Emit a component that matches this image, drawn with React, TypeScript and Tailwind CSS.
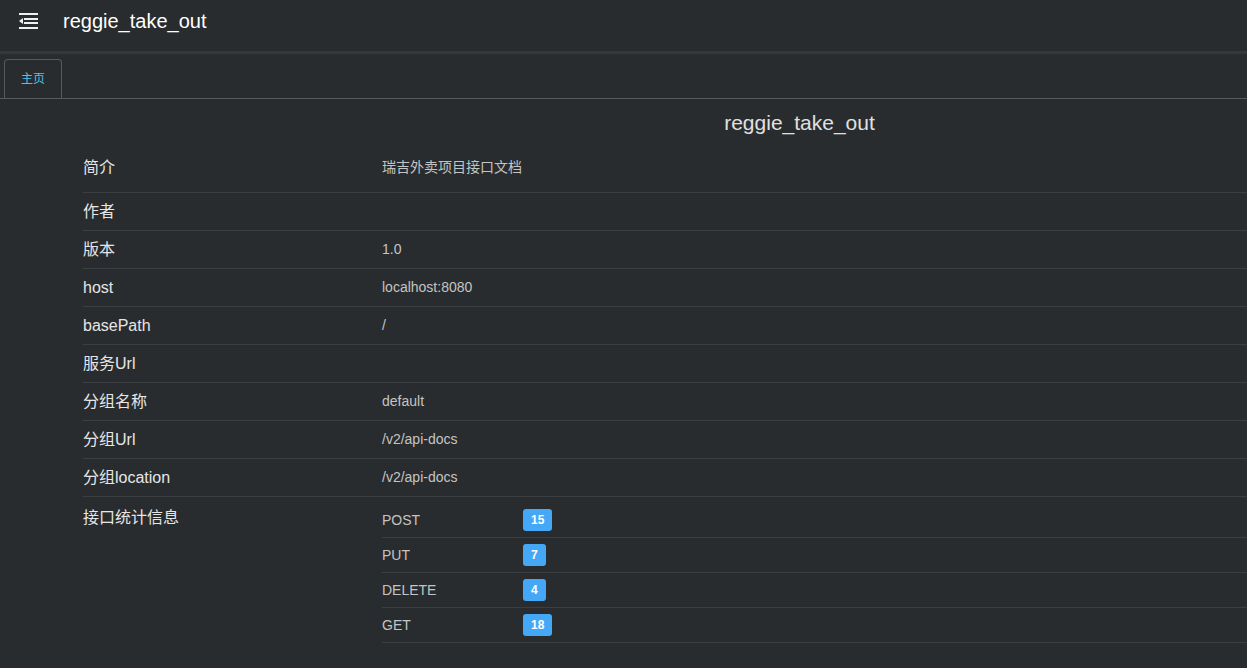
import React from "react";

const rows: { label: string; value: string; tall?: boolean }[] = [
  { label: "简介", value: "瑞吉外卖项目接口文档", tall: true },
  { label: "作者", value: "" },
  { label: "版本", value: "1.0" },
  { label: "host", value: "localhost:8080" },
  { label: "basePath", value: "/" },
  { label: "服务Url", value: "" },
  { label: "分组名称", value: "default" },
  { label: "分组Url", value: "/v2/api-docs" },
  { label: "分组location", value: "/v2/api-docs" },
];

const stats = [
  { m: "POST", n: 15 },
  { m: "PUT", n: 7 },
  { m: "DELETE", n: 4 },
  { m: "GET", n: 18 },
];

export default function App() {
  return (
    <div
      className="w-[1247px] h-[668px] overflow-hidden bg-[#292c2e] text-[#e2e2e2]"
      style={{ fontFamily: '"Liberation Sans", Arial, "Noto Sans CJK SC", sans-serif' }}
    >
      <div className="h-[51px] flex items-center pb-[9px]">
        <svg width="20" height="18" viewBox="0 0 20 18" className="ml-[19px]" fill="#f0f0f0">
          <rect x="0" y="1" width="19" height="2" />
          <rect x="5" y="6" width="14" height="2" />
          <rect x="5" y="10" width="14" height="2" />
          <rect x="0" y="15" width="19" height="2" />
          <polygon points="0,9 4,6 4,12" />
        </svg>
        <div className="ml-[24px] text-[20px] text-white leading-none">reggie_take_out</div>
      </div>
      <div className="h-[3px] bg-[#34383a]" />
      <div className="mt-[5px] h-[40px] border-b border-[#575a5c] flex items-end pl-[4px]">
        <div className="w-[58px] h-[39px] border border-b-0 border-[#575a5c] rounded-t-[4px] flex items-center justify-center text-[12px] text-[#4cc4ea]">
          主页
        </div>
      </div>
      <div className="h-[44px] pt-[4px] flex items-center justify-center pl-[352px] text-[21px] text-[#e0e0e0]">
        reggie_take_out
      </div>
      <div className="ml-[83px]">
        {rows.map((r) => (
          <div
            key={r.label}
            className={`flex items-center border-b border-[#3c3f41] ${r.tall ? "h-[50px]" : "h-[38px]"}`}
          >
            <div className="w-[299px] text-[16px] text-[#e6e6e6]">{r.label}</div>
            <div className="text-[14px] text-[#c4c4c4]">{r.value}</div>
          </div>
        ))}
        <div className="flex">
          <div className="w-[299px] pt-[9px] text-[16px] text-[#e6e6e6]">接口统计信息</div>
          <div className="flex-1 pt-[6px]">
            {stats.map((s) => (
              <div key={s.m} className="h-[35px] flex items-center border-b border-[#3c3f41]">
                <div className="w-[141px] text-[14px] text-[#c4c4c4]">{s.m}</div>
                <div className="h-[22px] px-[8px] rounded-[3px] bg-[#45a8f7] text-white text-[12px] font-bold flex items-center">
                  {s.n}
                </div>
              </div>
            ))}
          </div>
        </div>
      </div>
    </div>
  );
}
